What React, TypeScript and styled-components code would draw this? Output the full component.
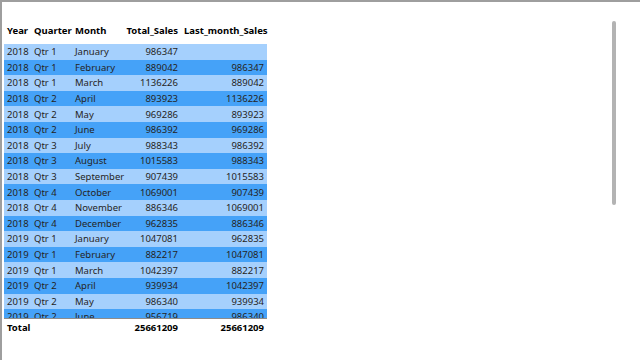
import React from 'react';
import styled, { createGlobalStyle } from 'styled-components';

interface SalesRow {
  year: number;
  quarter: string;
  month: string;
  total: number;
  last?: number;
}

const months = ['January', 'February', 'March', 'April', 'May', 'June', 'July', 'August', 'September', 'October', 'November', 'December'];
const totals = [986347, 889042, 1136226, 893923, 969286, 986392, 988343, 1015583, 907439, 1069001, 886346, 962835, 1047081, 882217, 1042397, 939934, 986340, 956719];

const rows: SalesRow[] = totals.map((total, i) => ({
  year: 2018 + Math.floor(i / 12),
  quarter: `Qtr ${Math.floor((i % 12) / 3) + 1}`,
  month: months[i % 12],
  total,
  last: i > 0 ? totals[i - 1] : undefined
}));

const cols = '27px 41px 48px 61px 86px';

const GlobalStyle = createGlobalStyle`
  html, body {
    margin: 0;
    padding: 0;
    background: #ffffff;
  }

  body {
    font-family: "Noto Sans", "Open Sans", sans-serif;
  }
`;

const Page = styled.div`
  box-sizing: border-box;
  width: 640px;
  height: 360px;
  border-top: 2px solid #9e9e9e;
  border-left: 2px solid #9e9e9e;
  display: flex;
  justify-content: space-between;
  overflow: hidden;
`;

const Table = styled.div`
  margin: 18px 0 0 2px;
  width: 263px;
  display: flex;
  flex-direction: column;
  font-size: 9.5px;
  color: #252423;
`;

const Row = styled.div<{ $shade?: 'light' | 'dark' }>`
  display: grid;
  grid-template-columns: ${cols};
  align-items: center;
  height: 15.6px;
  background: ${(p) => (p.$shade === 'dark' ? '#45a2f8' : p.$shade === 'light' ? '#a5d0fd' : 'transparent')};
`;

const HeadRow = styled(Row)`
  height: 20px;
  margin-bottom: 4px;
  font-weight: 700;
  color: #000000;
`;

const TotalRow = styled(Row)`
  height: 17px;
  font-weight: 700;
  color: #000000;
`;

const Body = styled.div`
  height: 274px;
  overflow: hidden;
  border-bottom: 1px solid #8c8c8c;
`;

const Cell = styled.div<{ $num?: boolean }>`
  padding: 0 3px;
  white-space: nowrap;
  text-align: ${(p) => (p.$num ? 'right' : 'left')};
`;

const Track = styled.div`
  margin: 19px 24px 0 0;
  width: 4px;
  height: 184px;
  border-radius: 2px;
  background: #b3b3b3;
`;

export default function App (): React.ReactElement {
  return (
    <>
      <GlobalStyle />
      <Page>
        <Table>
          <HeadRow>
            <Cell>Year</Cell>
            <Cell>Quarter</Cell>
            <Cell>Month</Cell>
            <Cell $num>Total_Sales</Cell>
            <Cell $num>Last_month_Sales</Cell>
          </HeadRow>
          <Body>
            {rows.map((r, i) => (
              <Row key={i} $shade={i % 2 ? 'dark' : 'light'}>
                <Cell>{r.year}</Cell>
                <Cell>{r.quarter}</Cell>
                <Cell>{r.month}</Cell>
                <Cell $num>{r.total}</Cell>
                <Cell $num>{r.last ?? ''}</Cell>
              </Row>
            ))}
          </Body>
          <TotalRow>
            <Cell>Total</Cell>
            <Cell />
            <Cell />
            <Cell $num>25661209</Cell>
            <Cell $num>25661209</Cell>
          </TotalRow>
        </Table>
        <Track />
      </Page>
    </>
  );
}
